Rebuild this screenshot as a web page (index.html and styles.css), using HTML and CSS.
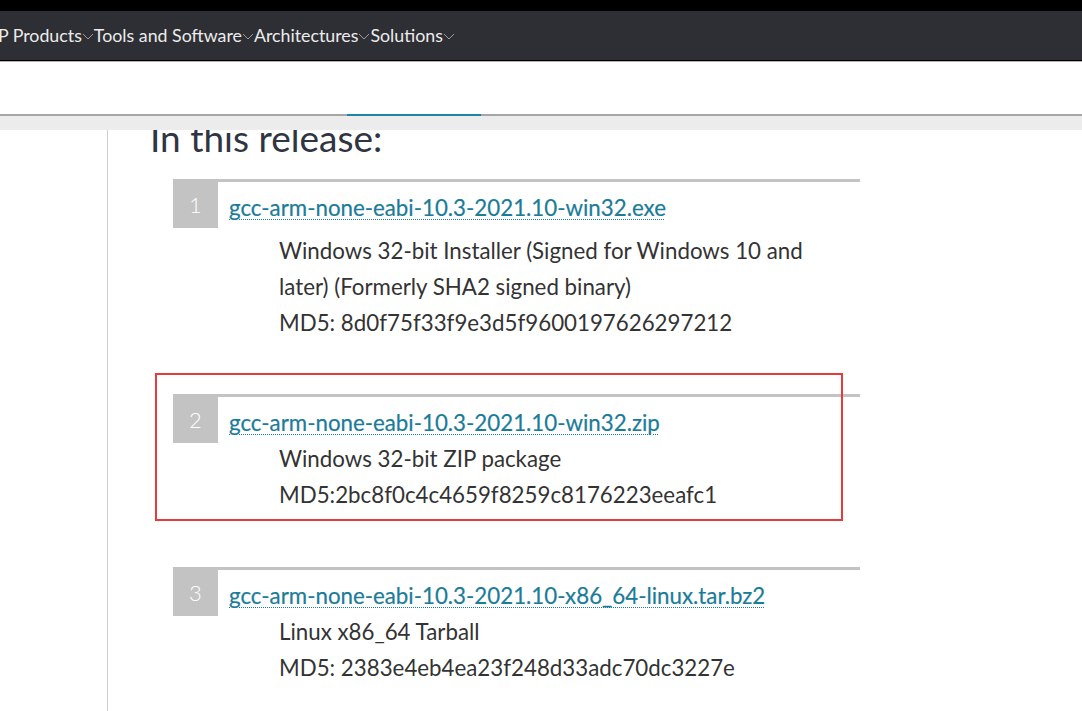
FILE: index.html
```html
<!DOCTYPE html>
<html lang="en">
<head>
    <meta charset="UTF-8">
    <meta name="viewport" content="width=device-width, initial-scale=1.0">
    <title>Arm GNU Toolchain Downloads</title>
    <link rel="stylesheet" href="styles.css">
</head>
<body>
    <div class="topbar"></div>

    <nav class="nav">
        <a class="nav-item first" href="#">IP Products<svg class="chev" viewBox="0 0 12 7"><polyline points="1,1 6,6 11,1"/></svg></a>
        <a class="nav-item" href="#">Tools and Software<svg class="chev" viewBox="0 0 12 7"><polyline points="1,1 6,6 11,1"/></svg></a>
        <a class="nav-item" href="#">Architectures<svg class="chev" viewBox="0 0 12 7"><polyline points="1,1 6,6 11,1"/></svg></a>
        <a class="nav-item" href="#">Solutions<svg class="chev" viewBox="0 0 12 7"><polyline points="1,1 6,6 11,1"/></svg></a>
    </nav>

    <div class="subbar"></div>
    <div class="band"><span class="tab-indicator"></span></div>

    <div class="main">
        <h2 class="title">In this release:</h2>

        <ol class="downloads">
            <li class="download">
                <span class="num">1</span>
                <div class="info">
                    <a class="file" href="#">gcc-arm-none-eabi-10.3-2021.10-win32.exe</a>
                    <p class="desc first-desc">Windows 32-bit Installer (Signed for Windows 10 and later) (Formerly SHA2 signed binary)</p>
                    <p class="desc">MD5: 8d0f75f33f9e3d5f9600197626297212</p>
                </div>
            </li>
            <li class="download marked">
                <span class="num">2</span>
                <div class="info">
                    <a class="file" href="#">gcc-arm-none-eabi-10.3-2021.10-win32.zip</a>
                    <p class="desc">Windows 32-bit ZIP package</p>
                    <p class="desc">MD5:2bc8f0c4c4659f8259c8176223eeafc1</p>
                </div>
                <span class="highlight"></span>
            </li>
            <li class="download">
                <span class="num">3</span>
                <div class="info">
                    <a class="file" href="#">gcc-arm-none-eabi-10.3-2021.10-x86_64-linux.tar.bz2</a>
                    <p class="desc">Linux x86_64 Tarball</p>
                    <p class="desc">MD5: 2383e4eb4ea23f248d33adc70dc3227e</p>
                </div>
            </li>
        </ol>
    </div>
</body>
</html>
```

FILE: styles.css
```css
body { margin: 0; font-family: Lato, "Open Sans", Arial, sans-serif; color: #333; background: #fff; overflow: hidden; }
.topbar { height: 11px; background: #000; }
.nav { height: 50px; background: #2e2f34; border-bottom: 1px solid #000; box-shadow: 0 1px 0 #b4b4b4; display: flex; align-items: center; overflow: hidden; padding-bottom: 1px; box-sizing: border-box; }
.nav-item { color: #ececec; text-decoration: none; font-size: 17.8px; display: flex; align-items: center; white-space: nowrap; }
.nav-item.first { margin-left: -7px; }
.chev { width: 12px; height: 7px; margin: 3px 0 0 0; fill: none; stroke: #9a9a9a; stroke-width: 1; }
.subbar { height: 52px; margin-top: 1px; background: #fff; border-bottom: 2px solid #a6a6a6; }
.band { height: 14px; background: #ececec; position: relative; }
.tab-indicator { position: absolute; left: 347px; top: -2px; width: 134px; height: 2px; background: #1a87a8; }
.main { margin-left: 107px; border-left: 1px solid #cfcfcf; padding-left: 42px; height: 600px; overflow: hidden; }
.title { margin: -14px 0 0; font-size: 37px; font-weight: 400; line-height: 44px; color: #2f3542; }
.downloads { list-style: none; margin: 19px 0 0 23px; padding: 0; width: 687px; }
.download { display: flex; border-top: 3px solid #c2c3c2; margin-bottom: 54px; position: relative; }
.download:first-child { margin-bottom: 53px; }
.num { flex: 0 0 45px; height: 49px; margin-top: -3px; background: #c2c3c2; color: #fff; font-size: 22px; font-weight: 300; display: flex; align-items: center; justify-content: center; padding-top: 2px; box-sizing: border-box; }
.info { padding-left: 11px; font-size: 22.3px; line-height: 36px; }
.file { display: inline-block; margin-top: 8px; color: #1a7c99; text-decoration: underline dotted #1a7c99; text-decoration-thickness: 1px; text-underline-offset: 3px; -webkit-text-stroke: 0.2px #1a7c99; }
.desc { margin: 0 0 0 50px; color: #333; width: 545px; }
.first-desc { margin-top: 7px; }
.highlight { position: absolute; left: -18px; top: -24px; width: 684px; height: 144px; border: 2px solid #e8393b; }
```
